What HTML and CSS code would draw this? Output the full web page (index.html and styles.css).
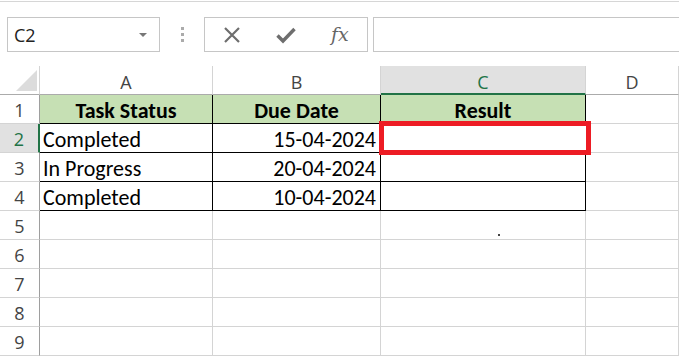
FILE: index.html
```html
<!DOCTYPE html>
<html lang="en">
<head>
  <meta charset="UTF-8">
  <title>Task Status</title>
  <link rel="stylesheet" href="styles.css">
</head>
<body>
  <div class="toolbar">
    <div class="name-box">
      <span>C2</span>
      <span class="caret"></span>
    </div>
    <div class="grip"><i></i><i></i><i></i></div>
    <div class="fx-buttons">
      <svg class="ico" width="18" height="18" viewBox="0 0 18 18">
        <path d="M2 2 L16 16 M16 2 L2 16" stroke="#6e6e6e" stroke-width="2.2" fill="none"/>
      </svg>
      <svg class="ico" width="20" height="18" viewBox="0 0 20 18">
        <path d="M1.5 9.5 L7 15 L18.5 3" stroke="#6e6e6e" stroke-width="3.4" fill="none"/>
      </svg>
      <span class="fx">fx</span>
    </div>
    <div class="formula"></div>
  </div>

  <div class="sheet">
    <div class="cell corner"><span class="tri"></span></div>
    <div class="cell hd">A</div>
    <div class="cell hd">B</div>
    <div class="cell hd sel">C</div>
    <div class="cell hd">D</div>

    <div class="cell rh">1</div>
    <div class="cell b head">Task Status</div>
    <div class="cell b head">Due Date</div>
    <div class="cell b head">Result</div>
    <div class="cell"></div>

    <div class="cell rh sel">2</div>
    <div class="cell b">Completed</div>
    <div class="cell b num">15-04-2024</div>
    <div class="cell b"></div>
    <div class="cell"></div>

    <div class="cell rh">3</div>
    <div class="cell b">In Progress</div>
    <div class="cell b num">20-04-2024</div>
    <div class="cell b"></div>
    <div class="cell"></div>

    <div class="cell rh">4</div>
    <div class="cell b">Completed</div>
    <div class="cell b num">10-04-2024</div>
    <div class="cell b"></div>
    <div class="cell"></div>

    <div class="cell rh">5</div>
    <div class="cell"></div>
    <div class="cell"></div>
    <div class="cell"></div>
    <div class="cell"></div>

    <div class="cell rh">6</div>
    <div class="cell"></div>
    <div class="cell"></div>
    <div class="cell"></div>
    <div class="cell"></div>

    <div class="cell rh">7</div>
    <div class="cell"></div>
    <div class="cell"></div>
    <div class="cell"></div>
    <div class="cell"></div>

    <div class="cell rh">8</div>
    <div class="cell"></div>
    <div class="cell"></div>
    <div class="cell"></div>
    <div class="cell"></div>

    <div class="cell rh">9</div>
    <div class="cell"></div>
    <div class="cell"></div>
    <div class="cell"></div>
    <div class="cell"></div>

    <!-- highlight box over C2 -->
    <div class="mark"></div>
    <div class="speck"></div>
  </div>
</body>
</html>
```

FILE: styles.css
```css
body {
  margin: 0;
  background-color: #fff;
  font-family: "Open Sans", "Noto Sans", sans-serif;
  overflow: hidden;
}

.toolbar {
  margin-top: 1px;
  border-top: 1px solid #d6d6d6;
  height: 65px;
  padding-top: 15px;
  box-sizing: border-box;
  display: flex;
  align-items: flex-start;
}

.name-box {
  margin-left: 7px;
  width: 153px;
  height: 35px;
  box-sizing: border-box;
  border: 1px solid #c6c6c6;
  display: flex;
  align-items: center;
  justify-content: space-between;
  padding: 0 12px 0 6px;
  font-size: 18px;
  color: #222;
}

.caret {
  width: 0;
  height: 0;
  border-left: 4px solid transparent;
  border-right: 4px solid transparent;
  border-top: 4px solid #777;
}

.grip {
  width: 44px;
  height: 35px;
  display: flex;
  flex-direction: column;
  align-items: center;
  justify-content: center;
  gap: 3px;
}

.grip i {
  display: block;
  width: 3px;
  height: 3px;
  background-color: #ababab;
}

.fx-buttons {
  width: 164px;
  height: 35px;
  box-sizing: border-box;
  border: 1px solid #c6c6c6;
  display: flex;
  align-items: center;
  padding-left: 18px;
  gap: 35px;
}

.fx {
  font-family: "DejaVu Serif", "Liberation Serif", serif;
  font-style: italic;
  font-size: 19px;
  color: #666;
  margin-top: -2px;
}

.formula {
  flex: 1;
  margin-left: 5px;
  height: 35px;
  box-sizing: border-box;
  border: 1px solid #c6c6c6;
  border-right: none;
}

.sheet {
  position: relative;
  display: grid;
  grid-template-columns: 40px 173px 168px 205px 1fr;
  grid-auto-rows: 29px;
}

.cell {
  box-sizing: border-box;
  border-right: 1px solid #d4d4d4;
  border-bottom: 1px solid #d4d4d4;
  font-family: "Carlito", "Lato", sans-serif;
  font-size: 22px;
  color: #000;
  padding: 2px 3px 0;
  line-height: 27px;
  white-space: nowrap;
}

.corner {
  display: flex;
  justify-content: flex-end;
  align-items: flex-end;
  padding: 0 2px 3px 0;
  border-bottom-color: #ababab;
}

.tri {
  width: 0;
  height: 0;
  border-left: 21px solid transparent;
  border-bottom: 21px solid #dcdcdc;
}

.hd {
  font-family: "Open Sans", "Noto Sans", sans-serif;
  font-size: 18px;
  color: #444;
  text-align: center;
  padding-top: 3px;
  border-bottom-color: #ababab;
}

.hd.sel {
  background-color: #e1e1e1;
  color: #217346;
  border-bottom: 2px solid #217346;
}

.rh {
  font-family: "Open Sans", "Noto Sans", sans-serif;
  font-size: 18px;
  color: #444;
  text-align: center;
  border-right-color: #9e9e9e;
}

.rh.sel {
  background-color: #e1e1e1;
  color: #217346;
  border-right: 2px solid #217346;
}

.b {
  border-right-color: #000;
  border-bottom-color: #000;
}

.head {
  background-color: #c6e0b4;
  font-weight: bold;
  text-align: center;
}

.num {
  text-align: right;
  padding-right: 4px;
}

.mark {
  position: absolute;
  left: 379px;
  top: 55px;
  width: 212px;
  height: 34px;
  box-sizing: border-box;
  border: 5px solid #ed1c24;
  background-color: #fff;
}

.speck {
  position: absolute;
  left: 498px;
  top: 168px;
  width: 2px;
  height: 2px;
  background-color: #444;
}
```
